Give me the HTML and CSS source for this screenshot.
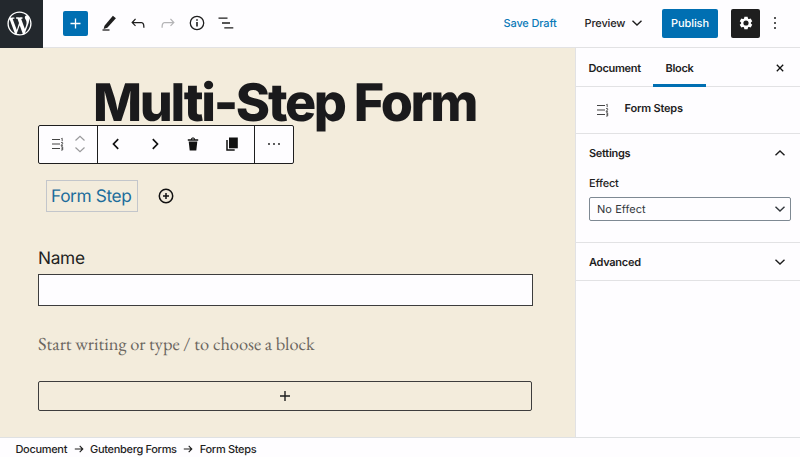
FILE: index.html
```html
<!DOCTYPE html>
<html lang="en">
<head>
<meta charset="utf-8">
<title>Multi-Step Form</title>
<link rel="stylesheet" href="styles.css">
</head>
<body>
<svg class="defs" width="0" height="0">
  <symbol id="steps" viewBox="0 0 14 14">
    <path d="M1 2.500h8M1 7h8M1 11.500h8" fill="none" stroke="#444" stroke-width="1.100"/>
    <path d="M10.300 1.700l.9-.5v3M10 5.600h1.600v1.200L10.100 8.400h1.800M10 9.800h1.700v3.200H10M10.400 11.300h1.300" fill="none" stroke="#444" stroke-width=".9"/>
  </symbol>
  <symbol id="chev" viewBox="0 0 12 12"><path d="M1.500 3.800L6 8l4.500-4.200" fill="none" stroke="currentColor" stroke-width="1.400"/></symbol>
  <symbol id="arrow" viewBox="0 0 10 10"><path d="M.8 5h8M5.700 1.900L8.800 5 5.700 8.100" fill="none" stroke="currentColor" stroke-width="1.100"/></symbol>
</svg>
<div class="app">
  <header class="topbar">
    <div class="logo">
      <svg width="29" height="29" viewBox="-2 -2 24 24" fill="#fff"><path d="M20 10c0-5.510-4.490-10-10-10C4.480 0 0 4.490 0 10c0 5.520 4.480 10 10 10 5.510 0 10-4.480 10-10zM7.780 15.370L4.370 6.220c.55-.02 1.170-.08 1.170-.08.5-.06.44-1.130-.06-1.110 0 0-1.450.11-2.370.11-.18 0-.37 0-.58-.01C4.120 2.690 6.870 1.110 10 1.110c2.330 0 4.450.87 6.050 2.340-.68-.11-1.650.39-1.650 1.580 0 .74.45 1.360.9 2.100.35.61.55 1.360.55 2.460 0 1.490-1.400 5-1.400 5l-3.030-8.370c.54-.02.82-.17.82-.17.5-.05.44-1.250-.06-1.220 0 0-1.440.12-2.380.12-.87 0-2.330-.12-2.330-.12-.5-.03-.56 1.200-.06 1.220l.92.08 1.260 3.410zM17.410 10c.24-.64.74-1.870.43-4.250.7 1.290 1.050 2.710 1.050 4.250 0 3.290-1.730 6.240-4.400 7.780.97-2.590 1.940-5.200 2.920-7.780zM6.100 18.090C3.120 16.650 1.110 13.530 1.110 10c0-1.300.23-2.480.72-3.590C3.250 10.300 4.670 14.200 6.100 18.090zm4.030-6.630l2.580 6.980c-.86.29-1.760.45-2.710.45-.79 0-1.570-.11-2.290-.33.81-2.380 1.620-4.740 2.420-7.100z"/></svg>
    </div>
    <div class="tools">
      <button class="add"><svg width="25" height="25" viewBox="0 0 25 25"><path d="M12.500 7.500v10M7.500 12.500h10" stroke="#fff" stroke-width="1.300"/></svg></button>
      <svg width="20" height="20" viewBox="0 0 20 20"><path d="M5.500 12.700L13.900 2.800l3 2.400-8.600 9.600-3.700 1.200z" fill="#1e1e1e"/><path d="M3.500 17h7" stroke="#1e1e1e" stroke-width="1.300"/></svg>
      <svg width="20" height="20" viewBox="0 0 24 24"><path d="M18.300 11.700c-.6-.6-1.400-.9-2.300-.9H6.700l2.900-3.300-1.100-1-4.500 5L8.500 16l1-1-2.700-2.700H16c.5 0 .9.2 1.300.5 1 1 1 3.400 1 4.500v.3h1.500v-.2c0-1.500 0-4.300-1.500-5.700z" fill="#1e1e1e"/></svg>
      <svg width="20" height="20" viewBox="0 0 24 24"><path transform="translate(24 0) scale(-1 1)" d="M18.300 11.700c-.6-.6-1.400-.9-2.300-.9H6.700l2.900-3.300-1.100-1-4.500 5L8.500 16l1-1-2.700-2.700H16c.5 0 .9.2 1.300.5 1 1 1 3.400 1 4.500v.3h1.500v-.2c0-1.500 0-4.300-1.500-5.700z" fill="#b4b4b6"/></svg>
      <svg width="20" height="20" viewBox="0 0 20 20"><circle cx="10" cy="10" r="6.700" fill="none" stroke="#1e1e1e" stroke-width="1.300"/><path d="M10 9v4.500M10 6.300v1.500" stroke="#1e1e1e" stroke-width="1.600"/></svg>
      <svg width="20" height="20" viewBox="0 0 20 20"><path d="M2.500 5.100h9M6 10h8M8.300 14.900h9" stroke="#1e1e1e" stroke-width="1.300"/></svg>
    </div>
    <div class="actions">
      <span class="draft">Save Draft</span>
      <span class="preview"><span>Preview</span><svg width="12" height="12"><use href="#chev"/></svg></span>
      <button class="publish">Publish</button>
      <button class="gear"><svg width="20" height="20" viewBox="-10 -10 20 20"><g fill="#fff"><path id="t" d="M-1.600-6.300h3.200l.6 3h-4.400z"/><use href="#t" transform="rotate(60)"/><use href="#t" transform="rotate(120)"/><use href="#t" transform="rotate(180)"/><use href="#t" transform="rotate(240)"/><use href="#t" transform="rotate(300)"/></g><circle r="3.700" fill="none" stroke="#fff" stroke-width="2.200"/></svg></button>
      <svg class="more" width="6" height="16" viewBox="0 0 6 16" fill="#1e1e1e"><circle cx="3" cy="3" r="1"/><circle cx="3" cy="8" r="1"/><circle cx="3" cy="13" r="1"/></svg>
    </div>
  </header>
  <main class="canvas">
    <h1>Multi-Step Form</h1>
    <div class="toolbar">
      <div class="group kind">
        <svg width="14" height="14"><use href="#steps"/></svg>
        <svg width="12" height="20" viewBox="0 0 12 20"><path d="M1.500 6.500L6 2.300l4.500 4.200M1.500 13.500L6 17.700l4.500-4.200" fill="none" stroke="#9a9a9c" stroke-width="1.200"/></svg>
      </div>
      <div class="group acts">
        <svg width="16" height="16" viewBox="0 0 16 16"><path d="M10.200 3.200L5.500 8l4.700 4.800" fill="none" stroke="#111" stroke-width="1.700"/></svg>
        <svg width="16" height="16" viewBox="0 0 16 16"><path d="M5.800 3.200L10.500 8l-4.700 4.800" fill="none" stroke="#111" stroke-width="1.700"/></svg>
        <svg width="16" height="16" viewBox="0 0 16 16"><path d="M2.800 3.300h3.100C6.200 1 9.800 1 10.100 3.300h3.100v1.500H2.800zM3.700 5.500h8.600l-1 9H4.700z" fill="#111"/><path d="M6.800 3.200c.3-1 2.100-1 2.400 0z" fill="#fff"/></svg>
        <svg width="16" height="16" viewBox="0 0 16 16"><path d="M5 1.500h8.800v10.800H5z" fill="#111"/><path d="M3 4v9.900h7.700" fill="none" stroke="#111" stroke-width="1.500"/></svg>
      </div>
      <div class="group dots"><svg width="16" height="4" viewBox="0 0 16 4" fill="#111"><circle cx="3" cy="2" r=".9"/><circle cx="8" cy="2" r=".9"/><circle cx="13" cy="2" r=".9"/></svg></div>
    </div>
    <div class="steps">
      <div class="step"><span>Form Step</span></div>
      <svg width="16" height="16" viewBox="0 0 16 16"><circle cx="8" cy="8" r="6.700" fill="none" stroke="#111" stroke-width="1.500"/><path d="M8 5v6M5 8h6" stroke="#111" stroke-width="1.500"/></svg>
    </div>
    <label class="name"><span>Name</span></label>
    <div class="field"></div>
    <p class="prompt"><span>Start writing or type / to choose a block</span></p>
    <div class="appender"><svg width="10" height="10" viewBox="0 0 10 10"><path d="M5 0v10M0 5h10" stroke="#1e1e1e" stroke-width="1.400"/></svg></div>
  </main>
  <aside class="side">
    <div class="tabs">
      <div class="tab doc">Document</div>
      <div class="tab active">Block</div>
      <svg class="close" width="8" height="8" viewBox="0 0 8 8"><path d="M.8.8l6.400 6.400M7.200.8L.8 7.200" stroke="#111" stroke-width="1.300"/></svg>
    </div>
    <div class="card"><svg width="14" height="14"><use href="#steps"/></svg><span>Form Steps</span></div>
    <div class="panel">
      <div class="head"><span class="set">Settings</span><svg class="up" width="12" height="12"><use href="#chev"/></svg></div>
      <div class="label"><span>Effect</span></div>
      <div class="select"><span>No Effect</span><svg width="12" height="12"><use href="#chev"/></svg></div>
    </div>
    <div class="head adv"><span>Advanced</span><svg width="12" height="12"><use href="#chev"/></svg></div>
  </aside>
  <footer class="crumbs">
    <span>Document</span><svg width="10" height="10"><use href="#arrow"/></svg><span>Gutenberg Forms</span><svg width="10" height="10"><use href="#arrow"/></svg><span>Form Steps</span>
  </footer>
</div>
</body>
</html>
```
FILE: styles.css
```css
* { box-sizing: border-box; }
body { margin: 0; font: 11px/14px Inter, "Liberation Sans", sans-serif; color: #1e1e1e; background: #fefdff; text-rendering: geometricPrecision; }
svg { display: block; flex: none; }
.defs { position: absolute; }
button { border: 0; padding: 0; font: inherit; text-rendering: inherit; }
.app { width: 800px; height: 457px; display: grid; grid-template: 48px 389px 20px / 575px 225px; overflow: hidden; }
.topbar { grid-column: 1 / 3; display: flex; justify-content: space-between; border-bottom: 1px solid #e2e2e4; }
.logo { width: 43px; height: 48px; background: #23282d; display: flex; align-items: center; padding-left: 4.500px; padding-bottom: 2px; }
.tools { flex: 1; display: flex; align-items: center; gap: 9.200px; padding-left: 20px; padding-bottom: 1px; }
.add { width: 25px; height: 25px; border-radius: 2px; background: #006fb2; margin-right: 2px; }
.actions { display: flex; align-items: center; padding-bottom: 1px; }
.draft { color: #0b7ab8; width: 81px; font-weight: 450; letter-spacing: -.15px; padding-left: .5px; }
.preview { display: flex; align-items: center; width: 78px; gap: 7px; font-weight: 450; letter-spacing: -.15px; padding-left: .500px; }
.preview svg { margin-left: -1px; }
.publish { width: 56px; height: 29px; background: #006fb2; color: #fff; border-radius: 2px; font-weight: 450; letter-spacing: -.1px; }
.gear { width: 29px; height: 29px; margin-left: 13px; background: #1e1e1e; border-radius: 2px; display: grid; place-items: center; }
.more { margin: 0 22px 0 12px; }
.canvas { background: #f3ecdc; padding: 29px 42px 0 38px; display: flex; flex-direction: column; }
h1 { margin: 0; height: 48px; font-size: 52px; line-height: 51px; font-weight: 800; letter-spacing: -2.300px; white-space: nowrap; padding-left: 55px; color: #1a1a1c; }
.toolbar { width: 256px; height: 39px; border: 1px solid #1e1e1e; border-radius: 2px; background: #fefdff; display: flex; z-index: 1; }
.group { display: flex; align-items: center; padding-bottom: 1px; }
.kind { width: 59px; padding-left: 11.500px; gap: 9px; }
.acts { width: 157px; padding-left: 10px; gap: 22.500px; border: solid #1e1e1e; border-width: 0 1px; margin-left: -1px; flex: 0 0 158px; }
.dots { flex: 1; justify-content: center; }
.steps { display: flex; align-items: center; margin: 16px 0 0 8px; height: 32px; gap: 19.500px; }
.step { width: 92px; height: 32px; border: 1px solid #c3c6cb; color: #1c6d9b; font-size: 17.300px; line-height: 32px; padding-left: 4px; white-space: nowrap; letter-spacing: -.38px; }
.name { margin-top: 35px; height: 27px; font-size: 17.300px; line-height: 23px; letter-spacing: -.3px; }
.field { width: 495px; height: 32px; border: 1px solid #3d3d3d; background: #fefdff; }
.prompt { margin: 26px 0 0; height: 49px; font: 18.400px/25px "EB Garamond", "Liberation Serif", serif; color: #6b665f; white-space: nowrap; }
.appender { width: 494px; height: 30px; border: 1px solid #3d3d3d; border-radius: 2px; display: grid; place-items: center; }
.side { border-left: 1px solid #e2e2e4; font-weight: 600; letter-spacing: -.28px; }
.tabs { height: 39px; display: flex; border-bottom: 1px solid #e2e2e4; }
.tab { height: 39px; line-height: 41px; letter-spacing: -.28px; }
.doc { width: 77px; padding-left: 12.500px; letter-spacing: -.32px; }
.active { width: 53px; text-align: center; border-bottom: 3px solid #006fb2; }
.close { margin: 16px 16px 0 auto; }
.card { height: 47px; padding: 14px 0 0 20px; display: flex; gap: 14.500px; border-bottom: 1px solid #e2e2e4; letter-spacing: -.2px; }
.card svg { margin-top: 2px; }
.panel { height: 109px; border-bottom: 1px solid #e2e2e4; }
.head { height: 38px; padding: 0 14px 0 13px; display: flex; justify-content: space-between; align-items: center; }
.up { transform: rotate(180deg); }
.label { height: 25px; padding: 4px 0 0 13px; font-weight: 450; letter-spacing: -.2px; }
.select { width: 202px; height: 24px; margin-left: 13px; border: 1px solid #7e8993; border-radius: 2px; display: flex; align-items: center; justify-content: space-between; padding: 0 4px 0 7px; font-weight: 400; letter-spacing: .05px; color: #32373c; }
.adv { border-bottom: 1px solid #e2e2e4; }
.crumbs { grid-column: 1 / 3; border-top: 1px solid #dfe1e3; display: flex; align-items: center; padding: 3px 0 0 15.500px; gap: 6.500px; white-space: nowrap; font-weight: 450; letter-spacing: -.32px; }
```
